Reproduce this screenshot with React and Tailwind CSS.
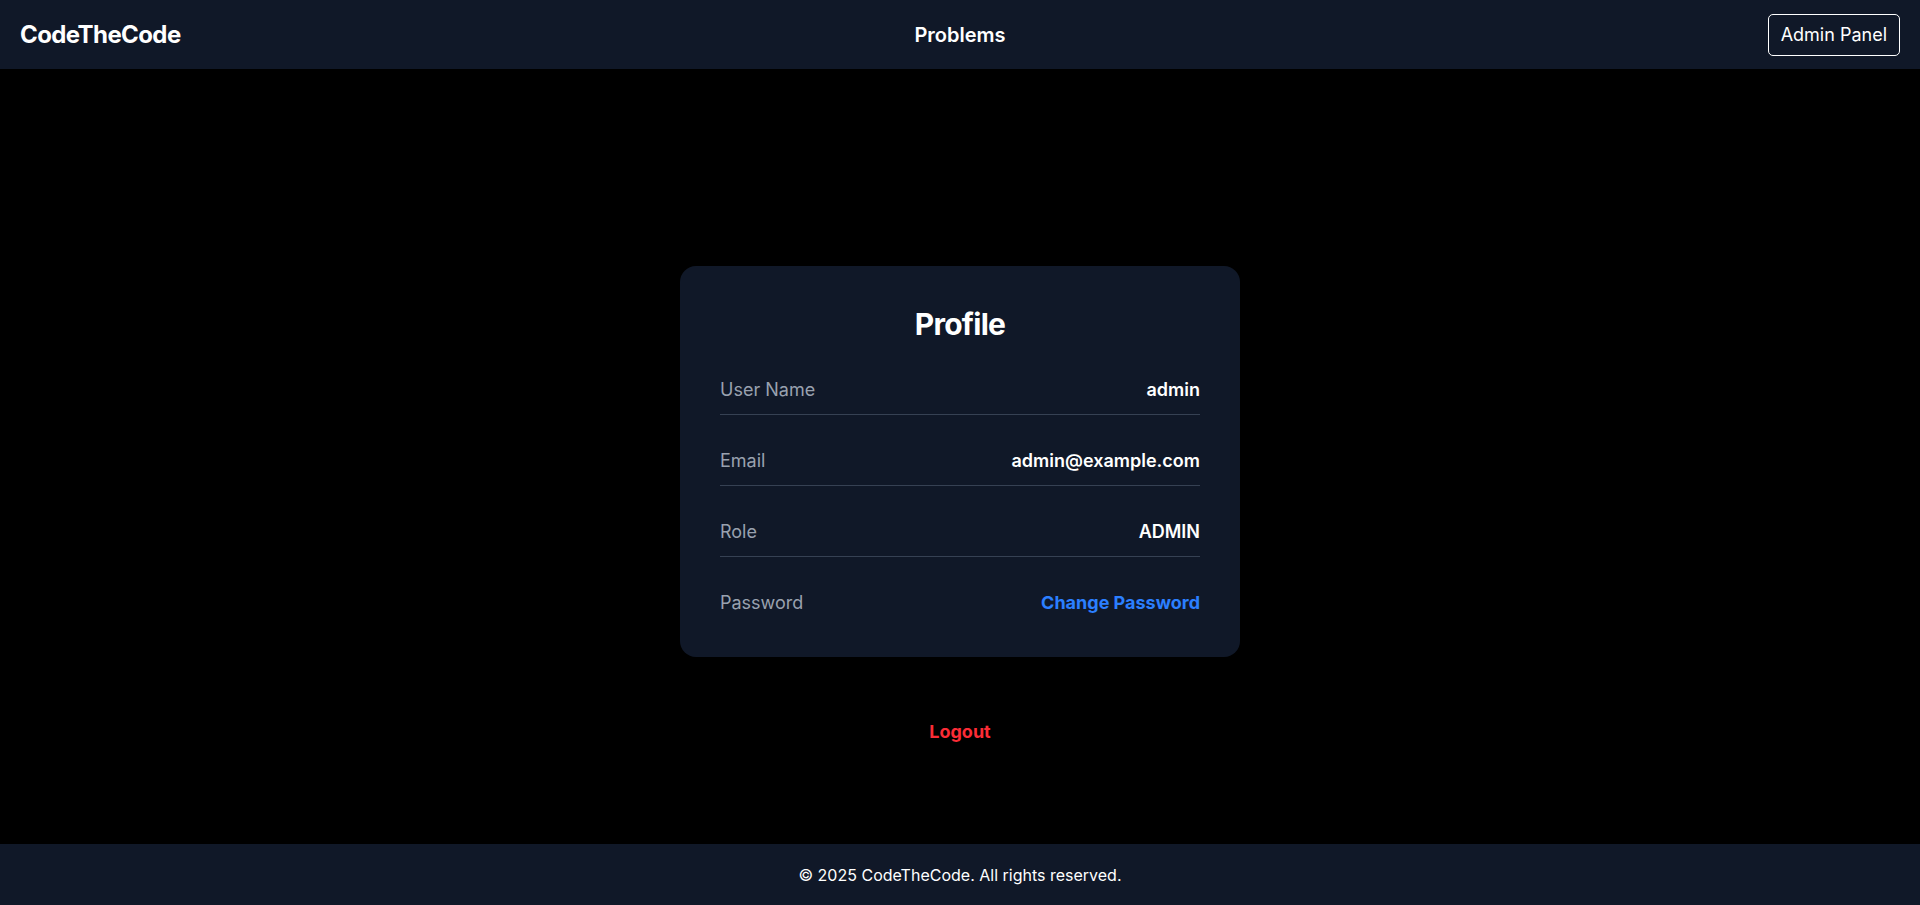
import React from "react";

const rows = [
  { label: "User Name", value: "admin" },
  { label: "Email", value: "admin@example.com" },
  { label: "Role", value: "ADMIN" },
];

export default function App() {
  return (
    <div className="min-h-screen flex flex-col bg-black text-white font-['Inter',sans-serif]">
      {/* Header */}
      <header className="h-[69px] bg-gray-900 px-5 grid grid-cols-3 items-center">
        <div className="text-2xl font-bold tracking-tight">CodeTheCode</div>
        <div className="justify-self-center text-xl font-semibold">Problems</div>
        <button className="justify-self-end border border-white rounded-[5px] px-3 py-1.5 text-lg leading-7">
          Admin Panel
        </button>
      </header>

      {/* Main */}
      <main className="flex-1 flex flex-col items-center pt-[197px]">
        <div className="w-[560px] bg-gray-900 rounded-2xl p-10">
          <h1 className="text-3xl font-bold text-center mb-[34px] tracking-tight">Profile</h1>
          <div>
            {rows.map((r) => (
              <div
                key={r.label}
                className="flex justify-between items-center pb-[10px] mb-[32px] border-b border-gray-700 text-lg leading-7"
              >
                <span className="text-gray-400">{r.label}</span>
                <span className="font-semibold">{r.value}</span>
              </div>
            ))}
            <div className="flex justify-between items-center text-lg leading-7">
              <span className="text-gray-400">Password</span>
              <button className="font-bold text-blue-500">Change Password</button>
            </div>
          </div>
        </div>
        <button className="mt-[61px] text-lg leading-7 font-bold text-red-500">Logout</button>
      </main>

      {/* Footer */}
      <footer className="h-[61px] bg-gray-900 flex items-center justify-center text-base">
        © 2025 CodeTheCode. All rights reserved.
      </footer>
    </div>
  );
}
